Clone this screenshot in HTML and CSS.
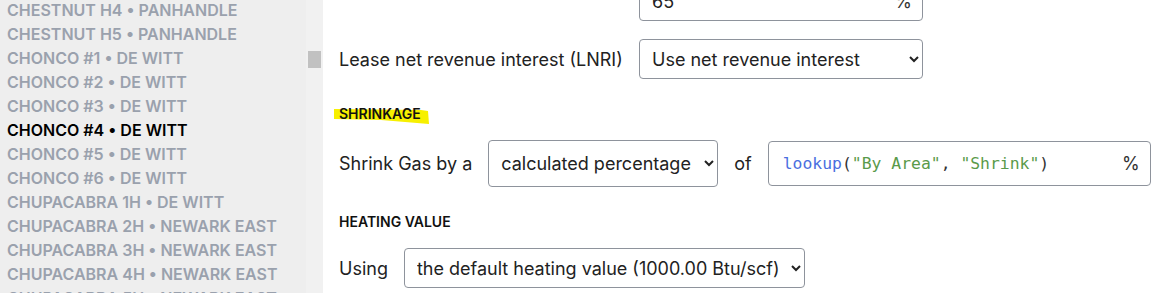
FILE: index.html
```html
<!DOCTYPE html>
<html lang="en">
<head>
    <meta charset="UTF-8">
    <meta name="viewport" content="width=device-width, initial-scale=1.0">
    <title>Well Economics - Shrinkage</title>
    <link rel="stylesheet" href="styles.css">
</head>
<body>

<div class="page">
    <div class="sidebar">
        <ul class="well-list">
            <li>CHESTNUT H4 &bull; PANHANDLE</li>
            <li>CHESTNUT H5 &bull; PANHANDLE</li>
            <li>CHONCO #1 &bull; DE WITT</li>
            <li>CHONCO #2 &bull; DE WITT</li>
            <li>CHONCO #3 &bull; DE WITT</li>
            <li class="active">CHONCO #4 &bull; DE WITT</li>
            <li>CHONCO #5 &bull; DE WITT</li>
            <li>CHONCO #6 &bull; DE WITT</li>
            <li>CHUPACABRA 1H &bull; DE WITT</li>
            <li>CHUPACABRA 2H &bull; NEWARK EAST</li>
            <li>CHUPACABRA 3H &bull; NEWARK EAST</li>
            <li>CHUPACABRA 4H &bull; NEWARK EAST</li>
            <li>CHUPACABRA 5H &bull; NEWARK EAST</li>
        </ul>
        <div class="scroll-track">
            <div class="scroll-thumb"></div>
        </div>
    </div>

    <div class="main">
        <div class="field-row">
            <label class="field-label"></label>
            <div class="text-box wide">
                <span>65</span>
                <span class="unit">%</span>
            </div>
        </div>

        <div class="field-row">
            <label class="field-label" for="lnri">Lease net revenue interest (LNRI)</label>
            <select id="lnri" class="wide">
                <option>Use net revenue interest</option>
            </select>
        </div>

        <h4 class="section-title highlighted">
            <svg class="marker" width="98" height="18" viewBox="0 0 98 18">
                <polygon points="1,1 88,2 95,3 96,16 48,12 1,11" fill="#f7f000"/>
            </svg>
            <span>SHRINKAGE</span>
        </h4>

        <div class="inline-row">
            <span>Shrink Gas by a</span>
            <select class="tall">
                <option>calculated percentage</option>
            </select>
            <span class="of">of</span>
            <div class="text-box code-box">
                <code><span class="fn">lookup</span>(<span class="str">"By Area"</span>, <span class="str">"Shrink"</span>)</code>
                <span class="unit">%</span>
            </div>
        </div>

        <h4 class="section-title">HEATING VALUE</h4>

        <div class="inline-row">
            <span>Using</span>
            <select>
                <option>the default heating value (1000.00 Btu/scf)</option>
            </select>
        </div>
    </div>
</div>

</body>
</html>
```

FILE: styles.css
```css
body {
    margin: 0;
    font-family: Inter, "Noto Sans", sans-serif;
    color: #222;
    overflow: hidden;
}
.page {
    display: flex;
    height: 293px;
    overflow: hidden;
}
.sidebar {
    width: 323px;
    display: flex;
    background-color: #eeeeee;
    flex-shrink: 0;
}
.well-list {
    list-style: none;
    margin: -2px 0 0 0;
    padding: 0 0 0 7px;
    flex: 1;
}
.well-list li {
    height: 24px;
    line-height: 24px;
    font-size: 16px;
    font-weight: 600;
    color: #9aa1ad;
    white-space: nowrap;
}
.well-list li.active {
    color: #000;
}
.scroll-track {
    width: 17px;
    background-color: #f1f1f1;
}
.scroll-thumb {
    margin: 51px 0 0 2px;
    width: 13px;
    height: 17px;
    background-color: #c1c1c1;
}
.main {
    padding-left: 16px;
    margin-top: -19px;
}
.field-row {
    display: flex;
    align-items: center;
    gap: 16px;
    margin-bottom: 18px;
}
.field-label {
    width: 284px;
    font-size: 18px;
}
select {
    font-family: Inter, "Noto Sans", sans-serif;
    font-size: 18px;
    color: #222;
    height: 40px;
    padding: 0 8px 0 8px;
    border: 1px solid #8e939c;
    border-radius: 4px;
    background-color: #fff;
}
select.wide {
    width: 284px;
}
select.tall {
    height: 47px;
    width: 230px;
}
.text-box {
    display: flex;
    align-items: center;
    justify-content: space-between;
    box-sizing: border-box;
    height: 40px;
    padding: 0 10px 0 12px;
    border: 1px solid #8e939c;
    border-radius: 4px;
    font-size: 18px;
}
.text-box.wide {
    width: 284px;
}
.unit {
    font-size: 18px;
    color: #333;
}
.section-title {
    position: relative;
    margin: 26px 0 0 0;
    font-size: 14px;
    font-weight: 600;
    color: #111;
    height: 18px;
    line-height: 18px;
}
.section-title span {
    position: relative;
}
.marker {
    position: absolute;
    left: -6px;
    top: 3px;
}
.inline-row {
    display: flex;
    align-items: center;
    gap: 16px;
    font-size: 18px;
    margin-top: 17px;
}
.of {
    margin-right: 0;
}
.code-box {
    width: 383px;
    height: 45px;
    padding: 0 10px 0 14px;
}
code {
    font-family: "DejaVu Sans Mono", monospace;
    font-size: 16.4px;
    color: #333;
}
.fn {
    color: #4a6fe0;
}
.str {
    color: #5a9a4a;
}
```
